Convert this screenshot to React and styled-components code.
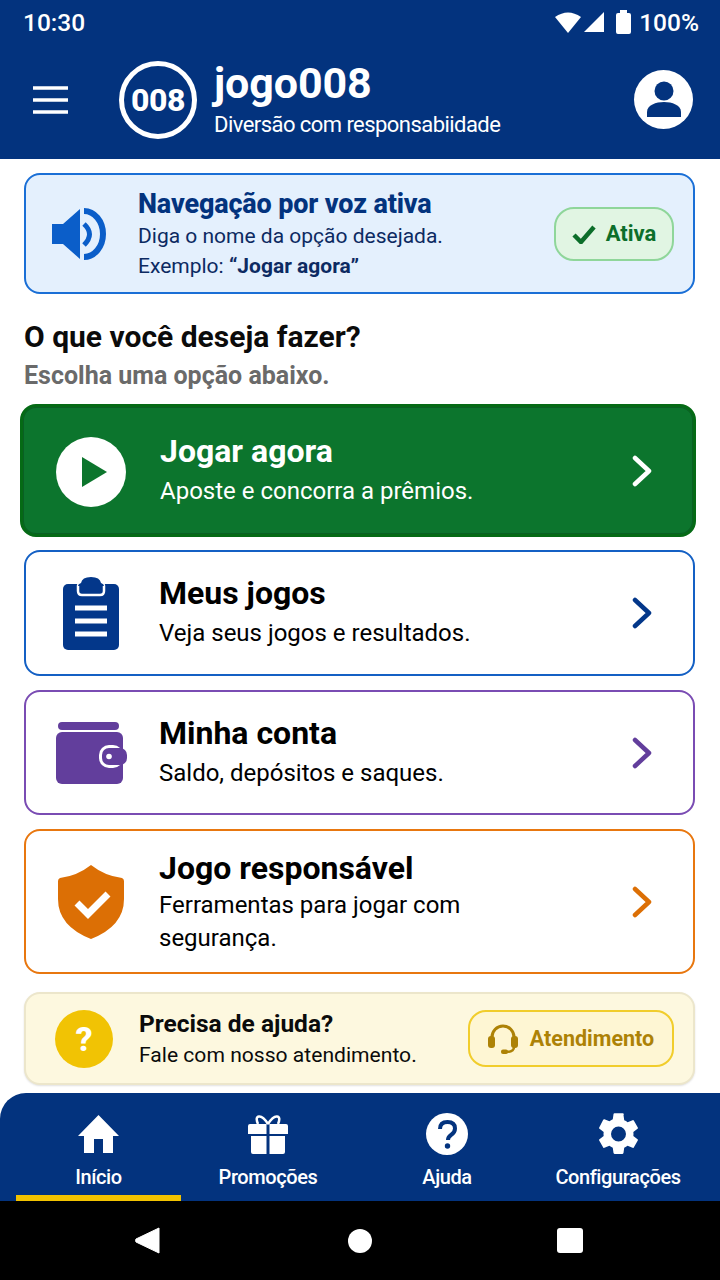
import React from 'react';
import styled, { createGlobalStyle } from 'styled-components';

const Global = createGlobalStyle`
  html, body { margin: 0; padding: 0; background: #fff; }
  body { font-family: Roboto, "Noto Sans", sans-serif; }
  * { box-sizing: border-box; }
`;
const Page = styled.div`
  width: 720px; height: 1280px; display: flex; flex-direction: column; overflow: hidden; background: #fff;
`;
const Top = styled.header`
  height: 159px; flex: none; background: #03337e; color: #fff; display: flex; flex-direction: column;
`;
const Status = styled.div`
  height: 44px; padding: 0 21px 0 23px; display: flex; align-items: center; justify-content: space-between;
  font-size: 24.5px; font-weight: 500;
`;
const StatusRight = styled.div`
  display: flex; align-items: center;
`;
const StatusIcon = styled.svg`
  margin-left: ${p => p.$ml || 0}px;
`;
const StatusPct = styled.span`
  margin-left: 8px;
`;
const Bar = styled.div`
  flex: 1; display: flex; align-items: center; padding: 0 27px 4px 32px;
`;
const Logo = styled.div`
  width: 78px; height: 78px; margin-left: 50px; border: 5px solid #fff; border-radius: 50%;
  display: flex; align-items: center; justify-content: center; font-size: 32px; font-weight: 800; letter-spacing: -0.5px;
`;
const Brand = styled.div`
  margin-left: 17px; flex: 1; display: flex; flex-direction: column;
`;
const BrandName = styled.div`
  font-size: 43px; line-height: 48px; font-weight: 700; letter-spacing: -0.1px; margin-bottom: 3px;
`;
const BrandSub = styled.div`
  font-size: 22px; line-height: 30px; font-weight: 400; letter-spacing: -0.55px;
`;
const Avatar = styled.div`
  width: 59px; height: 59px; border-radius: 50%; background: #fff; display: flex; align-items: center; justify-content: center;
`;
const Main = styled.main`
  flex: 1; padding: 14px 25px 0 24px; display: flex; flex-direction: column;
`;
const Voice = styled.section`
  height: 121px; border: 2px solid #1a6fd6; border-radius: 16px; background: #e4f0fd;
  display: flex; align-items: center; padding: 0 19px 0 25px; color: #03337e;
`;
const VoiceText = styled.div`
  flex: 1; margin-left: 31px; display: flex; flex-direction: column;
`;
const VoiceTitle = styled.div`
  font-size: 27px; line-height: 34px; font-weight: 800; letter-spacing: -0.15px;
`;
const VoiceLine = styled.div`
  font-size: 21px; line-height: 30px; color: #0c2a62;
  b { font-weight: 700; }
`;
const Active = styled.div`
  width: 120px; height: 54px; border: 2px solid #8fd69a; border-radius: 20px; background: #e1f5e3; color: #0c6e2a;
  display: flex; align-items: center; justify-content: center; gap: 10px; font-size: 22px; font-weight: 700;
`;
const Heading = styled.h1`
  margin: 26px 0 0; font-size: 30px; line-height: 34px; font-weight: 700; color: #0b0b0b;
`;
const SubHeading = styled.p`
  margin: 7px 0 0; font-size: 25px; line-height: 30px; font-weight: 700; color: #6a6a6a;
`;
const Cards = styled.div`
  margin-top: 13px; display: flex; flex-direction: column; gap: 14px;
`;
const Card = styled.a`
  display: flex; align-items: center; background: #fff; color: #000;
  height: ${p => p.$h}px;
  border: 2px solid ${p => p.$border};
  border-radius: 16px;
  padding: 0 40px 0 26px;
`;
const PrimaryCard = styled(Card)`
  background: #0c752d; color: #fff; border-width: 3px;
  margin: 0 -1px -1px -4px; padding-left: 33px;
  box-shadow: inset 0 0 0 1px #0a5f24;
`;
const CardIcon = styled.div`
  width: ${p => p.$w || 78}px; flex: none; display: flex; align-items: center; justify-content: center;
  margin-top: ${p => p.$mt || 0}px;
`;
const CardBody = styled.div`
  flex: 1; margin-left: ${p => p.$ml || 29}px; display: flex; flex-direction: column;
`;
const CardTitle = styled.div`
  font-size: 32px; line-height: 38px; font-weight: 700; margin-bottom: ${p => p.$mb ?? 2}px;
`;
const CardText = styled.div`
  font-size: 24px; line-height: ${p => p.$lh || 38}px; font-weight: 400; max-width: 370px;
`;
const Help = styled.section`
  margin-top: 18px; height: 93px; border: 2px solid #ece6cb; border-radius: 16px; background: #fdf8df;
  display: flex; align-items: center; padding: 0 19px 0 29px; box-shadow: 0 1px 2px rgba(0,0,0,.12);
`;
const HelpCircle = styled.div`
  width: 58px; height: 58px; flex: none; border-radius: 50%; background: #f1c304; color: #fff;
  display: flex; align-items: center; justify-content: center; font-size: 34px; font-weight: 800;
`;
const HelpText = styled.div`
  flex: 1; margin-left: 26px; display: flex; flex-direction: column; color: #0b0b0b;
`;
const HelpTitle = styled.div`
  font-size: 24.5px; line-height: 32px; font-weight: 700;
`;
const HelpLine = styled.div`
  font-size: 21.1px; line-height: 30px;
`;
const HelpButton = styled.div`
  width: 206px; height: 57px; border: 2px solid #f1cd2c; border-radius: 18px; background: #fef6d3; color: #ad8206;
  display: flex; align-items: center; justify-content: center; gap: 12px; font-size: 21.5px; font-weight: 700;
`;
const Nav = styled.nav`
  height: 108px; flex: none; background: #03337e; border-radius: 26px 0 0 0; display: grid;
  grid-template-columns: 197px 142px 216px 126px; color: #fff;
`;
const NavItem = styled.div`
  position: relative; display: flex; flex-direction: column; align-items: center; padding-top: 19px;
  font-size: 20px; font-weight: 500; letter-spacing: -0.4px;
  white-space: nowrap;
`;
const NavIcon = styled.div`
  height: 44px; display: flex; align-items: center; justify-content: center;
`;
const NavLabel = styled.div`
  margin-top: 8px; line-height: 26px;
`;
const NavMark = styled.div`
  position: absolute; left: 16px; right: 16px; bottom: 0; height: 6px; background: #f2c200;
`;
const SysNav = styled.div`
  height: 79px; flex: none; background: #000; display: flex; gap: 185px;
  align-items: center; padding: 0 0 0 135px;
`;

const Chev = ({ c }) => (
  <svg width="22" height="32" viewBox="0 0 22 32" fill="none">
    <path d="M4 3l14 13L4 29" stroke={c} strokeWidth="4.5" strokeLinecap="round" strokeLinejoin="round" />
  </svg>
);

export default function App() {
  return (
    <Page>
      <Global />
      <Top>
        <Status>
          <span>10:30</span>
          <StatusRight>
            <StatusIcon width="26" height="22" viewBox="0 0 26 22"><path d="M0 6Q13-3 26 6L13 22Z" fill="#fff" /></StatusIcon>
            <StatusIcon $ml={3} width="20" height="20" viewBox="0 0 20 20"><path d="M20 0v20H0Z" fill="#fff" /></StatusIcon>
            <StatusIcon $ml={12} width="15" height="24" viewBox="0 0 15 24"><path d="M4 3V0h7v3h2q2 0 2 2v17q0 2-2 2H2q-2 0-2-2V5q0-2 2-2Z" fill="#fff" /></StatusIcon>
            <StatusPct>100%</StatusPct>
          </StatusRight>
        </Status>
        <Bar>
          <svg width="37" height="30" viewBox="0 0 37 30"><path d="M1 3h35M1 15h35M1 27h35" stroke="#fff" strokeWidth="3.500" /></svg>
          <Logo>008</Logo>
          <Brand>
            <BrandName>jogo008</BrandName>
            <BrandSub>Diversão com responsabiidade</BrandSub>
          </Brand>
          <Avatar>
            <svg width="36" height="38" viewBox="0 0 36 38" fill="#03337e">
              <circle cx="18" cy="10" r="9.500" />
              <path d="M1 36v-5c0-7 9-10 17-10s17 3 17 10v5Z" />
            </svg>
          </Avatar>
        </Bar>
      </Top>
      <Main>
        <Voice>
          <svg width="56" height="52" viewBox="0 0 56 52">
            <path d="M1 16h11L29 1v50L12 36H1Z" fill="#0b5ec9" />
            <path d="M33 16Q44 26 33 37" stroke="#0b5ec9" strokeWidth="5" fill="none" />
            <path d="M33 3A19 23 0 0 1 33 49" stroke="#0b5ec9" strokeWidth="6" fill="none" />
          </svg>
          <VoiceText>
            <VoiceTitle>Navegação por voz ativa</VoiceTitle>
            <VoiceLine>Diga o nome da opção desejada.</VoiceLine>
            <VoiceLine>Exemplo: <b>“Jogar agora”</b></VoiceLine>
          </VoiceText>
          <Active>
            <svg width="24" height="20" viewBox="0 0 24 20"><path d="M2 11l7 7L22 3" stroke="#0c6e2a" strokeWidth="4.500" fill="none" /></svg>
            Ativa
          </Active>
        </Voice>
        <Heading>O que você deseja fazer?</Heading>
        <SubHeading>Escolha uma opção abaixo.</SubHeading>
        <Cards>
          <PrimaryCard $border="#056a15" $h={133}>
            <CardIcon $w={70} $mt={2}>
              <svg width="70" height="70" viewBox="0 0 70 70">
                <circle cx="35" cy="35" r="35" fill="#fff" />
                <path d="M26 20l25 15-25 15Z" fill="#0c752d" />
              </svg>
            </CardIcon>
            <CardBody $ml={34}>
              <CardTitle>Jogar agora</CardTitle>
              <CardText>Aposte e concorra a prêmios.</CardText>
            </CardBody>
            <Chev c="#fff" />
          </PrimaryCard>
          <Card $border="#1460c4" $h={126}>
            <CardIcon>
              <svg width="56" height="73" viewBox="0 0 56 73" fill="#03378a">
                <rect x="0" y="7" width="56" height="66" rx="5" />
                <path d="M15 9q0-2 3-3 1-6 10-6t10 6q3 1 3 3v5q0 4-4 4H19q-4 0-4-4Z" stroke="#fff" strokeWidth="2.500" />
                <path d="M18 6q1-6 10-6t10 6q3 1 3 3H15q0-2 3-3Z" />
                <path d="M12 31h32M12 44h32M12 57h32" stroke="#fff" strokeWidth="5" />
              </svg>
            </CardIcon>
            <CardBody>
              <CardTitle>Meus jogos</CardTitle>
              <CardText>Veja seus jogos e resultados.</CardText>
            </CardBody>
            <Chev c="#03378a" />
          </Card>
          <Card $border="#7a4cb3" $h={125}>
            <CardIcon>
              <svg width="74" height="62" viewBox="-2 0 74 62" fill="#623e9c">
                <rect x="2" y="0" width="61" height="8" rx="4" />
                <rect x="0" y="10" width="67" height="52" rx="6" />
                <rect x="43" y="23" width="24" height="23" rx="10" fill="#fff" />
                <rect x="46" y="26" width="25" height="17" rx="7" />
                <circle cx="53" cy="34.500" r="2.800" fill="#fff" />
              </svg>
            </CardIcon>
            <CardBody>
              <CardTitle>Minha conta</CardTitle>
              <CardText>Saldo, depósitos e saques.</CardText>
            </CardBody>
            <Chev c="#623e9c" />
          </Card>
          <Card $border="#e8770f" $h={145}>
            <CardIcon>
              <svg width="66" height="74" viewBox="0 0 66 74">
                <path d="M33 0q14 11 31 13 2 1 2 3v18q0 27-33 40Q0 61 0 34V16q0-2 2-3Q19 11 33 0Z" fill="#dc6f05" />
                <path d="M19 38l11 11 20-20" stroke="#fff" strokeWidth="7" fill="none" />
              </svg>
            </CardIcon>
            <CardBody>
              <CardTitle $mb={2}>Jogo responsável</CardTitle>
              <CardText $lh={33}>Ferramentas para jogar com segurança.</CardText>
            </CardBody>
            <Chev c="#dc6f05" />
          </Card>
        </Cards>
        <Help>
          <HelpCircle>?</HelpCircle>
          <HelpText>
            <HelpTitle>Precisa de ajuda?</HelpTitle>
            <HelpLine>Fale com nosso atendimento.</HelpLine>
          </HelpText>
          <HelpButton>
            <svg width="30" height="30" viewBox="0 0 30 30" fill="none">
              <path d="M4 16V13a11 11 0 0122 0v3" stroke="#ad8206" strokeWidth="3" />
              <rect x="0" y="12" width="7" height="12" rx="3" fill="#ad8206" />
              <rect x="23" y="12" width="7" height="12" rx="3" fill="#ad8206" />
              <path d="M26 23q0 5-8 5" stroke="#ad8206" strokeWidth="2.500" />
              <rect x="13" y="25.500" width="7" height="4.500" rx="2" fill="#ad8206" />
            </svg>
            Atendimento
          </HelpButton>
        </Help>
      </Main>
      <Nav>
        <NavItem>
          <NavIcon>
            <svg width="41" height="38" viewBox="0 0 41 38" fill="#fff"><path d="M20.500 0L41 21h-6v17H25V24h-9v14H6V21H0Z" /></svg>
          </NavIcon>
          <NavLabel>Início</NavLabel>
          <NavMark />
        </NavItem>
        <NavItem>
          <NavIcon>
            <svg width="40" height="39" viewBox="0 0 40 39" fill="#fff">
              <path d="M20 9Q15 1 11 1.500T10 9M20 9q5-8 9-7.500T30 9" fill="none" stroke="#fff" strokeWidth="2.500" />
              <path d="M2 9h16.500v10H0V11q0-2 2-2ZM21.500 9H38q2 0 2 2v8H21.500ZM3 21h15.500v18H5q-2 0-2-2ZM21.500 21H37v16q0 2-2 2H21.500Z" />
            </svg>
          </NavIcon>
          <NavLabel>Promoções</NavLabel>
        </NavItem>
        <NavItem>
          <NavIcon>
            <svg width="42" height="42" viewBox="0 0 42 42">
              <circle cx="21" cy="21" r="21" fill="#fff" />
              <path d="M14 16q0-7 7.500-7T29 15.500q0 4-4 6.500-3 2-3 5" stroke="#03337e" strokeWidth="4" fill="none" />
              <circle cx="21.500" cy="33" r="2.700" fill="#03337e" />
            </svg>
          </NavIcon>
          <NavLabel>Ajuda</NavLabel>
        </NavItem>
        <NavItem>
          <NavIcon>
            <svg width="41" height="42" viewBox="2.400 1.900 19.200 20.200" fill="#fff">
              <path fillRule="evenodd" d="M19.140 12.940c.04-.3.060-.61.060-.94s-.02-.64-.07-.94l2.030-1.580a.49.490 0 00.12-.61l-1.920-3.320a.49.490 0 00-.59-.22l-2.390.96a7 7 0 00-1.620-.94l-.36-2.540A.48.480 0 0013.920 2h-3.840a.47.470 0 00-.47.410l-.36 2.540c-.59.240-1.130.57-1.620.94l-2.390-.96a.48.480 0 00-.59.220L2.730 8.870a.47.470 0 00.12.610l2.030 1.580c-.05.300-.08.630-.08.940s.02.640.07.940l-2.030 1.580a.49.490 0 00-.12.610l1.920 3.320c.12.220.37.290.59.220l2.390-.96c.5.380 1.030.7 1.620.94l.36 2.540c.05.240.24.410.48.410h3.840c.24 0 .44-.17.470-.41l.36-2.540c.59-.24 1.130-.56 1.620-.94l2.390.96c.22.080.47 0 .59-.22l1.920-3.320a.47.470 0 00-.12-.61zM12 15.600a3.600 3.600 0 110-7.200 3.600 3.600 0 010 7.200z" />
            </svg>
          </NavIcon>
          <NavLabel>Configurações</NavLabel>
        </NavItem>
      </Nav>
      <SysNav>
        <svg width="28" height="27" viewBox="0 0 28 27"><path d="M24 1v25L1 15Q0 13.500 1 12Z" fill="#fff" stroke="#fff" strokeLinejoin="round" /></svg>
        <svg width="24" height="24" viewBox="0 0 24 24"><circle cx="12" cy="12" r="12" fill="#fff" /></svg>
        <svg width="26" height="25" viewBox="0 0 26 25"><rect width="26" height="25" rx="3" fill="#fff" /></svg>
      </SysNav>
    </Page>
  );
}
